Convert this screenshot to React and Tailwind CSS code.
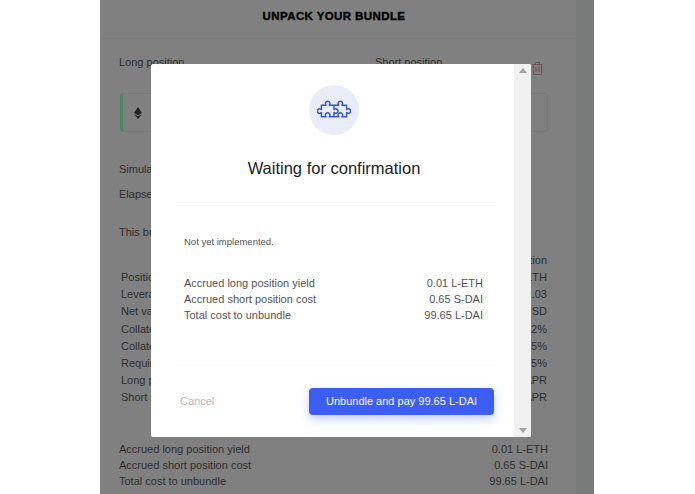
import React from 'react';

const font = { fontFamily: '"Liberation Sans", Arial, sans-serif' };

const stats = [
  ['Position size', '1 L-ETH'],
  ['Leverage', '1.03'],
  ['Net value', '100 USD'],
  ['Collateral ratio', '152%'],
  ['Collateral factor', '75%'],
  ['Required margin', '125%'],
  ['Long position APR', '1.5% APR'],
  ['Short position APR', '2.5% APR'],
];

const costs = [
  ['Accrued long position yield', '0.01 L-ETH'],
  ['Accrued short position cost', '0.65 S-DAI'],
  ['Total cost to unbundle', '99.65 L-DAI'],
];

const PuzzleIcon = () => (
  <svg width="34" height="21" viewBox="1 1 32 20" fill="none" stroke="#3a56d4" strokeWidth="1.4" strokeLinejoin="round">
    <path d="M5 6h4.5a2.2 2.2 0 1 1 3 0H17v4a2.2 2.2 0 1 1 0 3v4h-4.5a2.2 2.2 0 1 0-3 0H5v-4a2.2 2.2 0 1 1 0-3z" />
    <path d="M17 6h4.5a2.2 2.2 0 1 1 3 0H29v4a2.2 2.2 0 1 1 0 3v4h-4.5a2.2 2.2 0 1 0-3 0H17" />
  </svg>
);

const TrashIcon = () => (
  <svg width="11" height="13" viewBox="0 0 11 13" fill="none" stroke="#7f4a55" strokeWidth="1">
    <path d="M0.5 2.5h10M3.5 2.5v-2h4v2M1.5 2.5v10h8v-10M4 5v5M7 5v5" />
  </svg>
);

const EthIcon = () => (
  <svg width="8" height="12" viewBox="0 0 8 12" fill="#222222">
    <path d="M4 0l4 6-4 2.2L0 6zM0 7l4 2.2L8 7l-4 5z" />
  </svg>
);

const Background = () => (
  <div className="w-[476px] h-full flex flex-col text-[11px] text-[#2e2e2e]">
    <div className="h-[39px] pt-[9px] border-b border-[#7c7c7c]">
      <h1 className="w-full pr-[8px] text-center text-[11.5px] leading-[14px] font-bold text-black tracking-[0.4px]" style={{ WebkitTextStroke: '0.4px black' }}>UNPACK YOUR BUNDLE</h1>
    </div>
    <div className="pl-[19px] w-[494px]">
      <div className="flex mt-[15px] h-[14px]">
        <span className="w-[256px]">Long position</span>
        <span>Short position</span>
      </div>
      <div className="mt-[25px] ml-[1px] w-[428px] h-[39px] flex items-center rounded border border-[#787878] border-l-[3px] border-l-[#4a8560] pl-[11px]">
        <EthIcon />
      </div>
      <p className="mt-[29px] h-[14px]">Simulated time</p>
      <p className="mt-[11px] h-[14px]">Elapsed time</p>
      <p className="mt-[24px] h-[14px]">This bundle</p>
      <div className="mt-[14px] w-[428px] text-right h-[14px]">Short position</div>
      <div className="ml-[2px] w-[426px] flex flex-col mt-[3px]">
        {stats.map(([label, value]) => (
          <div key={label} className="flex justify-between h-[17.2px] leading-[17px]">
            <span>{label}</span>
            <span>{value}</span>
          </div>
        ))}
      </div>
      <div className="w-[429px] flex flex-col mt-[34px]">
        {costs.map(([label, value]) => (
          <div key={label} className="flex justify-between h-[16px] leading-[16px]">
            <span>{label}</span>
            <span>{value}</span>
          </div>
        ))}
      </div>
    </div>
  </div>
);

const Modal = () => (
  <div className="absolute left-[51px] top-[64px] w-[380px] h-[373px] bg-white flex rounded-[2px] overflow-hidden">
    <div className="w-[363px] pl-[25px] pr-[18px] pt-[21px] flex flex-col">
      <div className="ml-[133px] w-[50px] h-[50px] rounded-full bg-[#e9edfa] flex items-center justify-center">
        <PuzzleIcon />
      </div>
      <h2 className="mt-[22px] pr-[4px] text-center text-[16.5px] leading-[22px] text-[#222222]">Waiting for confirmation</h2>
      <div className="mt-[26px] border-t border-[#f6f6f6]" />
      <p className="mt-[30px] ml-[8px] text-[9.5px] leading-[12px] text-[#555555]">Not yet implemented.</p>
      <div className="mt-[27px] ml-[8px] mr-[13px] flex flex-col text-[11px] text-[#555555]">
        {costs.map(([label, value]) => (
          <div key={label} className="flex justify-between h-[16px] leading-[16px]">
            <span>{label}</span>
            <span>{value}</span>
          </div>
        ))}
      </div>
      <div className="mt-[41px] border-t border-[#f8f8f8]" />
      <div className="mt-[23px] flex items-center justify-between pl-[4px] pr-[2px]">
        <span className="text-[11px] text-[#b8b8b8]">Cancel</span>
        <button className="w-[185px] h-[27px] rounded-[4px] bg-[#3d5ef5] text-white text-[11px] font-medium shadow-[0_4px_10px_rgba(61,94,245,0.3)]">Unbundle and pay 99.65 L-DAI</button>
      </div>
    </div>
    <div className="w-[17px] bg-[#f1f1f1] flex flex-col items-center justify-between py-[4px]">
      <svg width="8" height="5" viewBox="0 0 8 5" fill="#a3a3a3"><path d="M4 0l4 5H0z" /></svg>
      <svg width="8" height="5" viewBox="0 0 8 5" fill="#a3a3a3"><path d="M4 5L0 0h8z" /></svg>
    </div>
  </div>
);

export default function App() {
  return (
    <div className="w-[695px] h-[494px] bg-white flex justify-center overflow-hidden" style={font}>
      <div className="relative w-[494px] h-[494px] -ml-[1px] bg-[#797a7a] overflow-hidden">
        <div className="h-full w-[476px] bg-[#808080]">
          <Background />
        </div>
        <div className="absolute left-[432px] top-[62px]"><TrashIcon /></div>
        <Modal />
      </div>
    </div>
  );
}
